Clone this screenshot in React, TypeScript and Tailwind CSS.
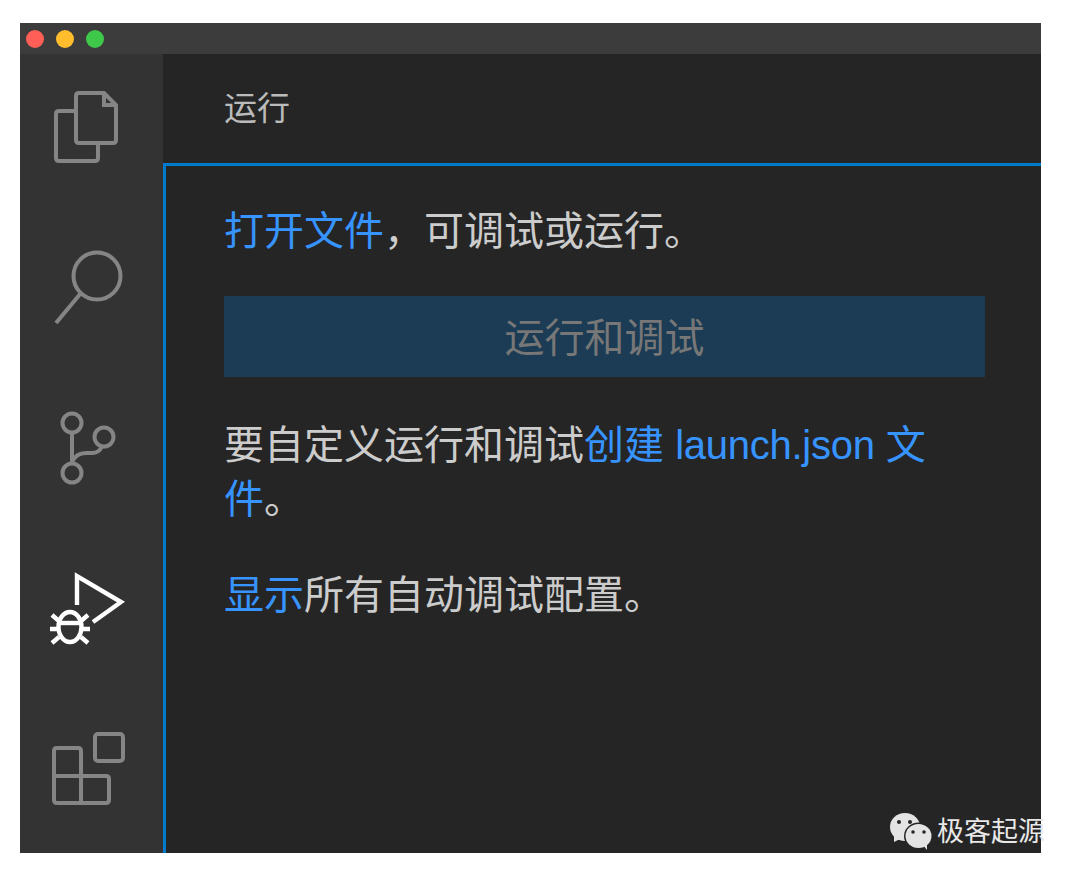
const cjk = "font-['Liberation_Sans','Noto_Sans_CJK_SC',sans-serif]";

const FilesIcon = () => (
    <svg width="80" height="80" viewBox="0 0 80 80" fill="none" stroke="#858585" strokeWidth="4">
        <path d="M30 24H13Q10 24 10 27V71Q10 74 13 74H49Q52 74 52 71V56"/>
        <path d="M33 6H58L70 18V53Q70 56 67 56H33Q30 56 30 53V9Q30 6 33 6Z"/>
        <path d="M58 6V18H70" strokeWidth="4"/>
    </svg>
);

const SearchIcon = () => (
    <svg width="80" height="80" viewBox="0 0 80 80" fill="none" stroke="#858585" strokeWidth="4">
        <circle cx="51" cy="29" r="23.5"/>
        <path d="M35 46L10 76"/>
    </svg>
);

const GitIcon = () => (
    <svg width="80" height="80" viewBox="0 0 80 80" fill="none" stroke="#858585" strokeWidth="4">
        <circle cx="26" cy="16" r="9.5"/>
        <circle cx="58" cy="30" r="9.5"/>
        <circle cx="26" cy="66" r="9.5"/>
        <path d="M26 25.5V56.5"/>
        <path d="M56 39.500Q53 46 46 46H40Q30 46 26 55"/>
    </svg>
);

const DebugIcon = () => (
    <svg width="80" height="80" viewBox="0 0 80 80" fill="none" stroke="#ffffff" strokeWidth="4.400">
        <path d="M31 37V8L75 34L47 54"/>
        <ellipse cx="24" cy="59" rx="11.500" ry="15"/>
        <path d="M12 55H36"/>
        <path d="M6 47L13 53M42 47L35 53M4 61H12M36 61H44M6 75L13 69M42 75L35 69"/>
    </svg>
);

const ExtensionsIcon = () => (
    <svg width="80" height="80" viewBox="0 0 80 80" fill="none" stroke="#858585" strokeWidth="4">
        <rect x="49" y="6" width="28" height="27" rx="3"/>
        <path d="M11 20H32Q35 20 35 23V75"/>
        <path d="M8 48H60Q63 48 63 51V72Q63 75 60 75H11Q8 75 8 72V23Q8 20 11 20"/>
    </svg>
);

const WechatIcon = () => (
    <svg width="44" height="40" viewBox="0 0 44 40">
        <ellipse cx="16" cy="15" rx="15" ry="14" fill="#e4e4e4"/>
        <path d="M5 22L5 30L13 26Z" fill="#e4e4e4"/>
        <ellipse cx="29.500" cy="24" rx="13.500" ry="12.500" fill="#252525" stroke="#252525" strokeWidth="2"/>
        <ellipse cx="29.500" cy="24" rx="13" ry="12" fill="#e4e4e4"/>
        <path d="M34 33L38 38L38 31Z" fill="#e4e4e4"/>
        <circle cx="10" cy="10" r="2" fill="#252525"/>
        <circle cx="21" cy="10" r="2" fill="#252525"/>
        <circle cx="24" cy="20" r="1.800" fill="#252525"/>
        <circle cx="35" cy="20" r="1.800" fill="#252525"/>
    </svg>
);

const App = () => {
    return (
        <div className={`min-h-[881px] bg-white pt-[23px] pl-[20px] ${cjk}`}>
            <div className="w-[1021px] h-[830px] flex flex-col">
                <div className="h-[31px] bg-[#3c3c3c] flex items-center gap-[12px] pl-[6px] pt-[1px]">
                    <span className="w-[18px] h-[18px] rounded-full bg-[#ff5f57]"></span>
                    <span className="w-[18px] h-[18px] rounded-full bg-[#ffbd2e]"></span>
                    <span className="w-[18px] h-[18px] rounded-full bg-[#3ec94a]"></span>
                </div>
                <div className="flex-1 flex min-h-0">
                    <div className="w-[143px] bg-[#333333] flex flex-col gap-[80px] pt-[33px] pl-[26px]">
                        <FilesIcon/>
                        <SearchIcon/>
                        <GitIcon/>
                        <div className="mt-[1px]"><DebugIcon/></div>
                        <ExtensionsIcon/>
                    </div>
                    <div className="flex-1 bg-[#252525] flex flex-col min-w-0">
                        <div className="h-[109px] flex items-center pl-[61px] text-[33px] text-[#bbbbbb]">运行</div>
                        <div className="relative flex-1 border-t-[3px] border-l-[3px] border-[#007acc] pl-[58px] pr-[56px] text-[40px] text-[#cccccc]">
                            <p className="mt-[38px] leading-[54px]">
                                <span className="text-[#3794ff]">打开文件</span>，可调试或运行。
                            </p>
                            <button className="mt-[38px] w-[761px] h-[81px] pt-[2px] bg-[#1b3c54] text-[#777777] text-center">运行和调试</button>
                            <p className="mt-[41px] leading-[54px]">
                                要自定义运行和调试<span className="text-[#3794ff]">创建 <span className="tracking-[-0.25px]">launch.json</span> 文<br/>件</span>。
                            </p>
                            <p className="mt-[42px] leading-[54px]">
                                <span className="text-[#3794ff]">显示</span>所有自动调试配置。
                            </p>
                            <div className="absolute left-[723px] top-[646px] flex items-center gap-[4px] whitespace-nowrap text-[27px] text-[#e8e8e8]">
                                <WechatIcon/>
                                <span>极客起源</span>
                            </div>
                        </div>
                    </div>
                </div>
            </div>
        </div>
    );
};

export default App;
